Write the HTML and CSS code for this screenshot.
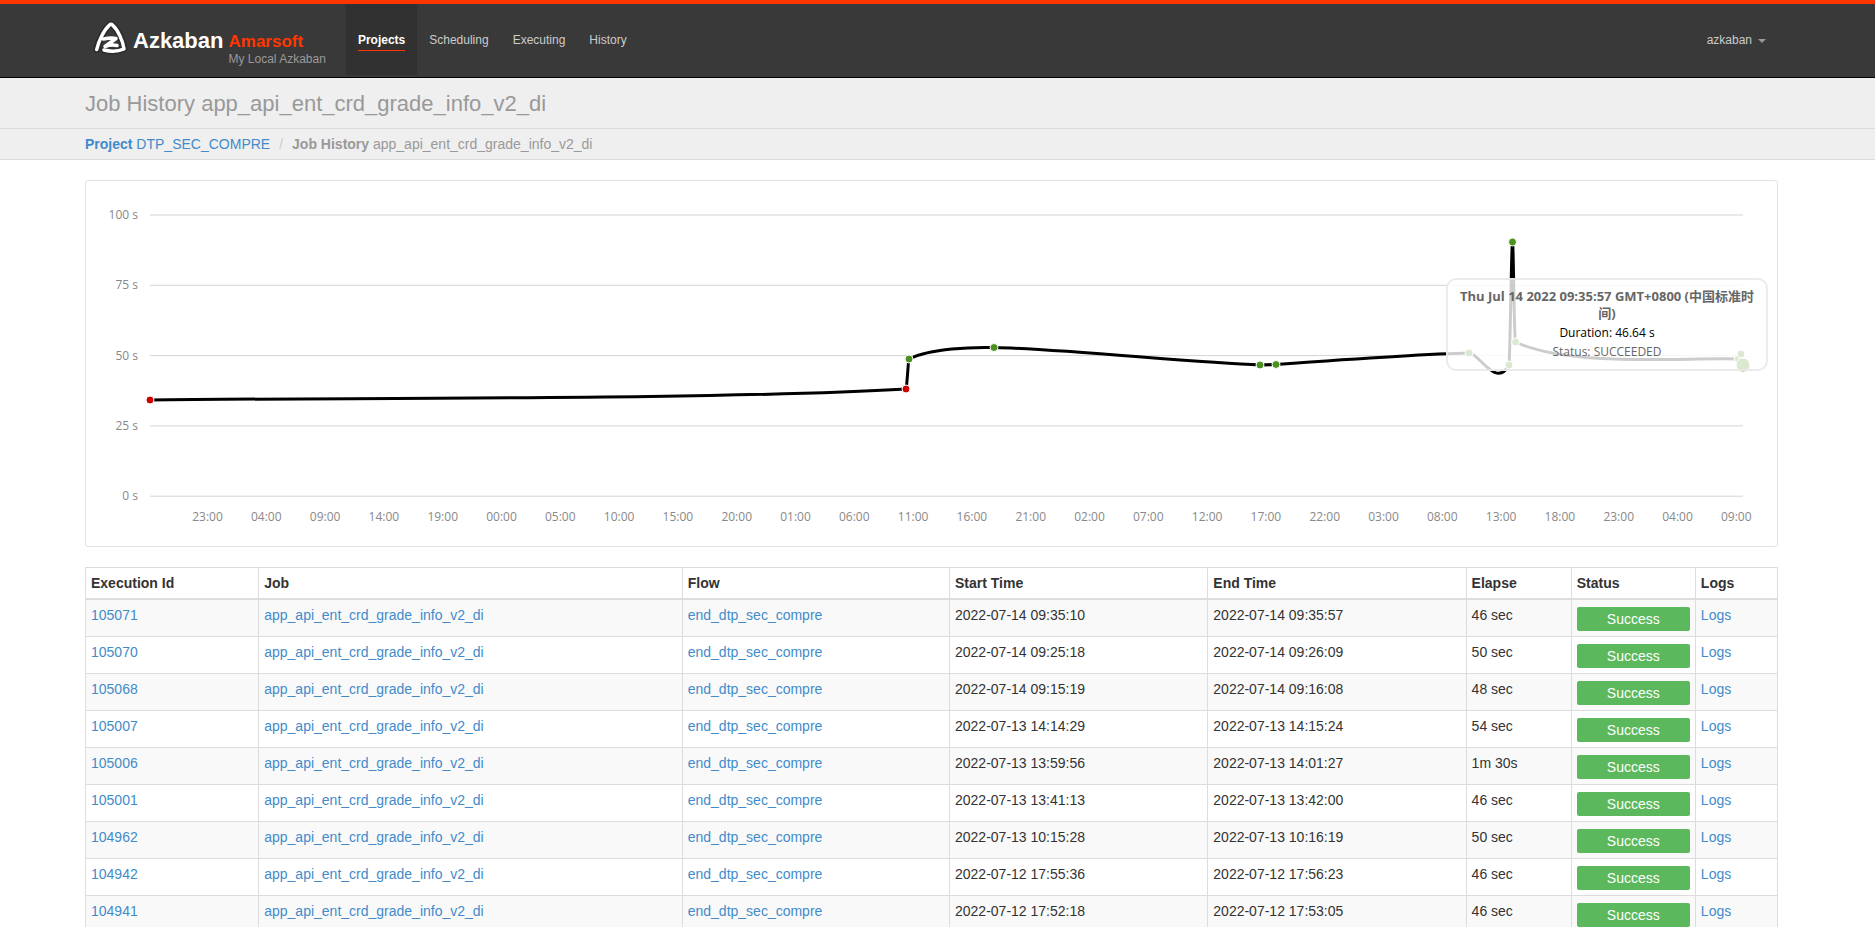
FILE: index.html
```
<!DOCTYPE html>
<html lang="en">
<head>
    <meta charset="UTF-8">
    <meta name="viewport" content="width=device-width, initial-scale=1.0">
    <title>Azkaban - Job History</title>
    <link rel="stylesheet" href="styles.css">
</head>
<body>
    <header class="navbar">
        <div class="container navbar-row">
            <a class="brand" href="#">
                <svg class="brand-logo" viewBox="0 0 38 38" aria-hidden="true">
                    <path class="logo-shadow" d="M5.700 31.500C7.500 23 13 12 18.500 7Q20 5.500 21.500 7C27 12 32 23 33 31C27 33.500 19 33.500 13 32"/>
                    <path d="M5.700 31.500C7.500 23 13 12 18.500 7Q20 5.500 21.500 7C27 12 32 23 33 31C27 33.500 19 33.500 13 32"/>
                    <path d="M12.500 21C17 20 21 19.500 25 20.500L14 28.500C18 27 22 26.500 26 27.500"/>
                </svg>
                <span class="brand-name">Azkaban</span>
            </a>
            <div class="brand-env">
                <div class="env-name">Amarsoft</div>
                <div class="env-label">My Local Azkaban</div>
            </div>
            <nav class="nav">
                <a class="active" href="#"><span>Projects</span></a>
                <a href="#"><span>Scheduling</span></a>
                <a href="#"><span>Executing</span></a>
                <a href="#"><span>History</span></a>
            </nav>
            <nav class="nav nav-right">
                <a href="#"><span>azkaban</span><i class="caret"></i></a>
            </nav>
        </div>
    </header>

    <div class="page-header">
        <div class="container">
            <h1>Job History app_api_ent_crd_grade_info_v2_di</h1>
        </div>
    </div>

    <div class="page-breadcrumb">
        <ol class="container breadcrumb">
            <li><a href="#"><strong>Project</strong> DTP_SEC_COMPRE</a></li>
            <li><strong>Job History</strong> app_api_ent_crd_grade_info_v2_di</li>
        </ol>
    </div>

    <main class="container">
        <div class="chart-well">
            <svg id="chart" class="chart" viewBox="0 0 1691 365"></svg>
            <div class="chart-hover">
                <div class="hover-label">Thu Jul 14 2022 09:35:57 GMT+0800 (中国标准时间)</div>
                <div class="hover-duration">Duration: 46.64 s</div>
                <div>Status: SUCCEEDED</div>
            </div>
        </div>

        <table class="jobs">
            <colgroup>
                <col class="col-id"><col class="col-job"><col class="col-flow"><col class="col-time">
                <col class="col-time"><col class="col-elapse"><col class="col-status"><col class="col-logs">
            </colgroup>
            <thead>
                <tr>
                    <th>Execution Id</th>
                    <th>Job</th>
                    <th>Flow</th>
                    <th>Start Time</th>
                    <th>End Time</th>
                    <th>Elapse</th>
                    <th>Status</th>
                    <th>Logs</th>
                </tr>
            </thead>
            <tbody id="job-rows"></tbody>
        </table>
    </main>

    <script src="history.js"></script>
</body>
</html>
```
FILE: styles.css
```
* {
  box-sizing: border-box;
}

body {
  margin: 0;
  background: #fff;
  color: #333;
  font-family: "Liberation Sans", Arial, sans-serif;
  font-size: 14px;
  line-height: 20px;
}

a {
  color: #428bca;
  text-decoration: none;
}

.container {
  margin: 0 97px 0 85px;
}

/* navbar */
.navbar {
  background: #393939;
  border-top: 4px solid #ff3601;
  border-bottom: 1px solid #000;
}

.navbar-row {
  display: flex;
  height: 73px;
}

.brand {
  display: flex;
  align-items: flex-start;
  padding: 14px 0 0 6px;
  color: #fff;
}

.brand-logo {
  width: 38px;
  height: 38px;
  fill: none;
  stroke: #fff;
  stroke-width: 3.5;
  stroke-linecap: round;
  stroke-linejoin: round;
}

.logo-shadow {
  stroke: rgba(0, 0, 0, 0.2);
  stroke-width: 7;
}

.brand-name {
  margin-left: 4px;
  padding-top: 12px;
  font-size: 22px;
  font-weight: bold;
  line-height: 22px;
}

.brand-env {
  padding: 29px 20px 0 5px;
}

.env-name {
  color: #ff3601;
  font-size: 17px;
  font-weight: bold;
  line-height: 18px;
}

.env-label {
  color: #999;
  font-size: 12px;
  line-height: 16px;
}

.nav {
  display: flex;
  font-size: 12px;
}

.nav a {
  height: 71px;
  padding: 26px 12px 0;
  color: #ccc;
}

.nav span {
  display: inline-block;
  line-height: 19px;
}

.nav .active {
  background: #313131;
  color: #fff;
  font-weight: bold;
}

.nav .active span {
  border-bottom: 1px solid #ff3601;
}

.nav-right {
  margin-left: auto;
}

.caret {
  display: inline-block;
  margin-left: 6px;
  border: 4px solid transparent;
  border-top-color: #999;
  border-bottom: 0;
  vertical-align: middle;
}

/* page title and breadcrumb */
.page-header,
.page-breadcrumb {
  background: #efefef;
  border-bottom: 1px solid #ddd;
  color: #999;
}

.page-header h1 {
  margin: 0;
  padding: 13px 0 12px;
  font-size: 22px;
  font-weight: normal;
  line-height: 25px;
}

.breadcrumb {
  display: flex;
  padding: 5px 0;
  list-style: none;
}

.breadcrumb li + li::before {
  content: "/";
  padding: 0 9px;
  color: #ccc;
}

/* duration chart */
.chart-well {
  position: relative;
  margin: 20px 0;
  border: 1px solid #e3e3e3;
  border-radius: 3px;
}

.chart {
  display: block;
  width: 100%;
  font-family: "Open Sans", "Noto Sans", sans-serif;
  font-size: 12px;
}

.grid {
  stroke: #d4d4d4;
  stroke-width: 1;
}

.axis-y,
.axis-x {
  fill: #888;
}

.axis-y {
  text-anchor: end;
}

.axis-x {
  text-anchor: middle;
}

.series {
  fill: none;
  stroke: #000;
  stroke-width: 3;
}

.point {
  fill: #4c9120;
  stroke: #fff;
  stroke-width: 1;
}

.point.failed {
  fill: #c00;
}

.chart-hover {
  position: absolute;
  top: 97px;
  right: 9px;
  width: 322px;
  padding: 8px;
  border: 2px solid rgba(230, 230, 230, 0.8);
  border-radius: 10px;
  background: rgba(255, 255, 255, 0.8);
  color: #666;
  font-family: "Open Sans", "Noto Sans CJK SC", sans-serif;
  font-size: 12px;
  line-height: 19px;
  text-align: center;
}

.hover-label {
  margin-bottom: 1px;
  font-size: 13px;
  font-weight: bold;
  line-height: 17px;
}

.hover-duration {
  color: #000;
}

/* executions table */
.jobs {
  width: 100%;
  table-layout: fixed;
  border-collapse: collapse;
}

.col-id { width: 173px; }
.col-job { width: 423px; }
.col-flow { width: 267px; }
.col-time { width: 258px; }
.col-elapse { width: 105px; }
.col-status { width: 124px; }
.col-logs { width: 82px; }

.jobs th,
.jobs td {
  padding: 5px;
  border: 1px solid #ddd;
  text-align: left;
  vertical-align: top;
}

.jobs th {
  border-bottom-width: 2px;
}

.jobs tbody tr:nth-child(odd) {
  background: #f9f9f9;
}

.status {
  margin-top: 2px;
  border-radius: 2px;
  background: #5cb85c;
  color: #fff;
  line-height: 24px;
  text-align: center;
}
```
FILE: history.js
```
const NS = 'http://www.w3.org/2000/svg';
const chart = document.getElementById('chart');

function add(name, attrs, text) {
    const el = document.createElementNS(NS, name);
    Object.entries(attrs).forEach(([key, value]) => el.setAttribute(key, value));
    if (text) el.textContent = text;
    chart.appendChild(el);
}

// y axis
[100, 75, 50, 25, 0].forEach((sec, i) => {
    const y = 34 + i * 70.3;
    add('line', {class: 'grid', x1: 64, x2: 1657, y1: y, y2: y});
    add('text', {class: 'axis-y', x: 52, y: y + 4}, sec + ' s');
});

// x axis, one label every five hours
for (let i = 0; i < 27; i++) {
    const hour = (23 + i * 5) % 24;
    add('text', {class: 'axis-x', x: 121.500 + i * 58.8, y: 340}, String(hour).padStart(2, '0') + ':00');
}

add('path', {
    class: 'series',
    d: 'M64 219C253 216.500 631 219 820 208C821 205.500 822 182 823 178C845 167 887 166 908 166.500'
        + 'C975 168 1107 181.500 1174 184L1190 183.500C1238 180 1335 173 1383 172'
        + 'C1393 172 1410 208 1423 184C1424 181 1425.500 61 1426.500 61'
        + 'C1427.500 61 1428 158 1429.500 161C1486 187 1600 176 1652 178L1655 173L1657 184'
});

const points = [
    [64, 219, 'failed'], [820, 208, 'failed'], [823, 178], [908, 166.5], [1174, 184], [1190, 183.5],
    [1383, 172], [1423, 184], [1426.5, 61], [1429.5, 161], [1652, 178], [1655, 173], [1657, 184]
];
points.forEach(([x, y, state], i) => {
    const r = i === points.length - 1 ? 7 : 4;
    add('circle', {class: 'point ' + (state || ''), cx: x, cy: y, r: r});
});

// executions
const rows = [
    ['105071', '2022-07-14 09:35:10', '2022-07-14 09:35:57', '46 sec'],
    ['105070', '2022-07-14 09:25:18', '2022-07-14 09:26:09', '50 sec'],
    ['105068', '2022-07-14 09:15:19', '2022-07-14 09:16:08', '48 sec'],
    ['105007', '2022-07-13 14:14:29', '2022-07-13 14:15:24', '54 sec'],
    ['105006', '2022-07-13 13:59:56', '2022-07-13 14:01:27', '1m 30s'],
    ['105001', '2022-07-13 13:41:13', '2022-07-13 13:42:00', '46 sec'],
    ['104962', '2022-07-13 10:15:28', '2022-07-13 10:16:19', '50 sec'],
    ['104942', '2022-07-12 17:55:36', '2022-07-12 17:56:23', '46 sec'],
    ['104941', '2022-07-12 17:52:18', '2022-07-12 17:53:05', '46 sec']
];
document.getElementById('job-rows').innerHTML = rows.map(([id, start, end, elapse]) => `
    <tr>
        <td><a href="#">${id}</a></td>
        <td><a href="#">app_api_ent_crd_grade_info_v2_di</a></td>
        <td><a href="#">end_dtp_sec_compre</a></td>
        <td>${start}</td>
        <td>${end}</td>
        <td>${elapse}</td>
        <td><div class="status">Success</div></td>
        <td><a href="#">Logs</a></td>
    </tr>
`).join('');
```
